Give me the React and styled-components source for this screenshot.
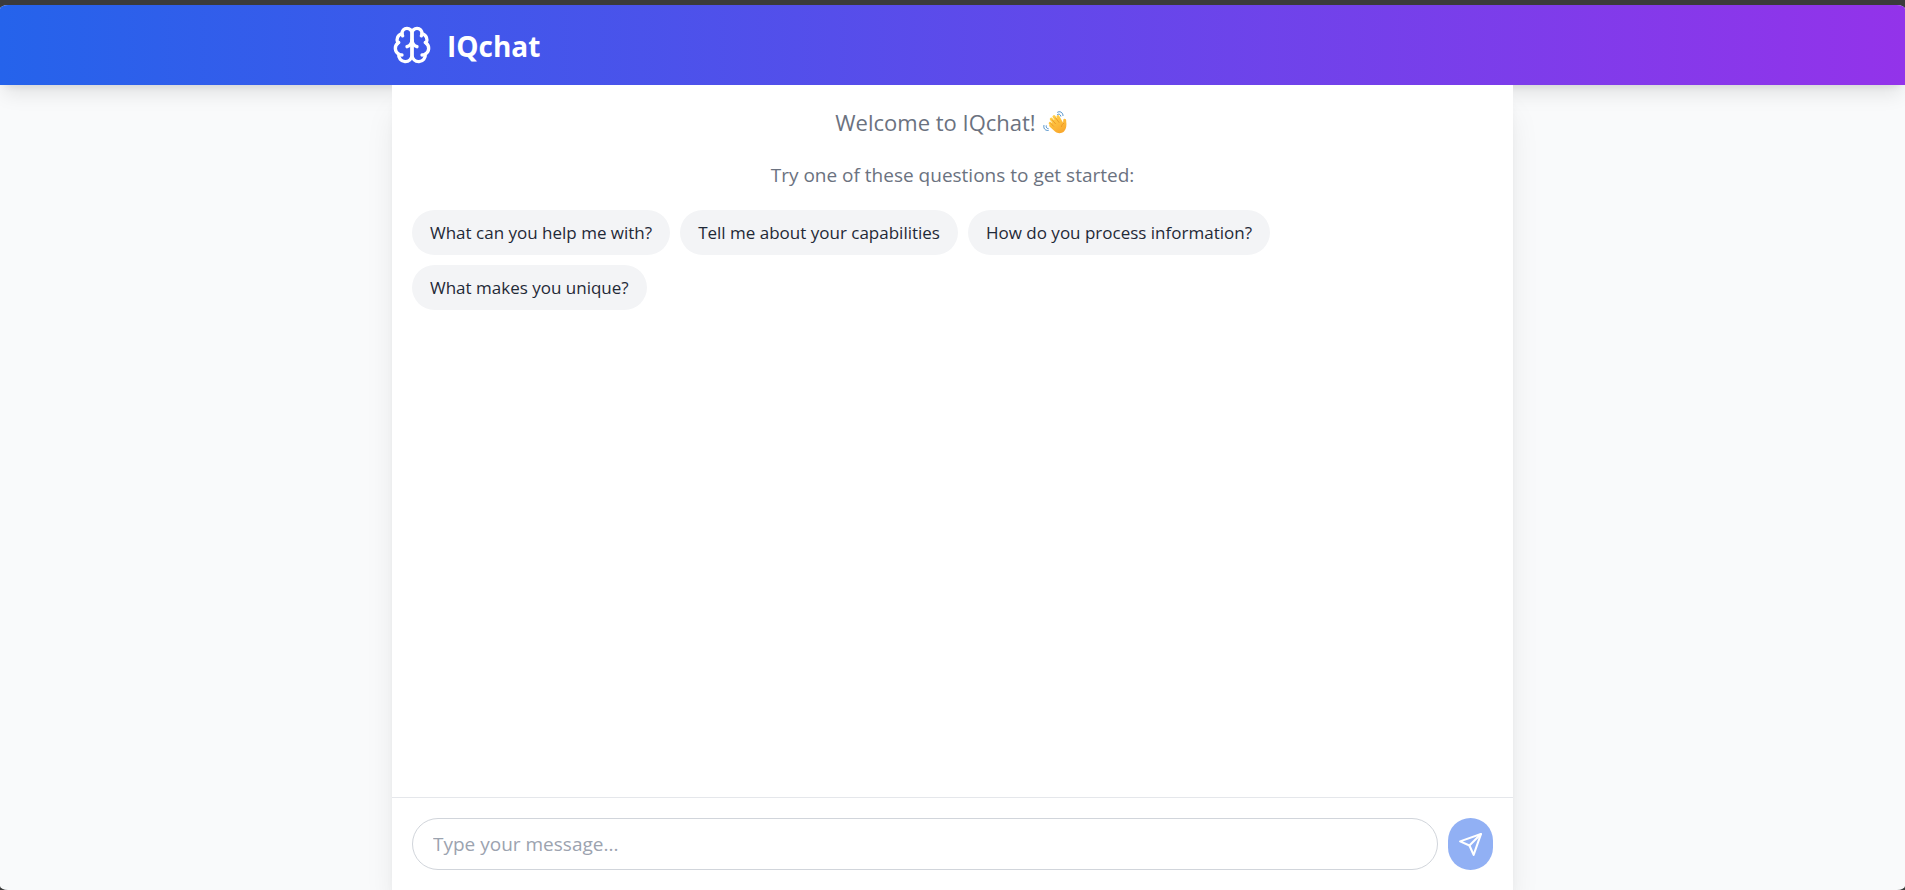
import React, { useState } from "react";
import styled, { createGlobalStyle } from "styled-components";

const GlobalStyle = createGlobalStyle`
  *, *::before, *::after { box-sizing: border-box; }
  body {
    margin: 0;
    background: #3b3b3b;
    font-family: "Segoe UI", "Open Sans", "Noto Sans", sans-serif;
  }
  button, input { font-family: inherit; }
`;

const Frame = styled.div`
  display: flex;
  flex-direction: column;
  height: 100vh;
  padding-top: 5px;
`;

const Window = styled.div`
  flex: 1;
  min-height: 0;
  display: flex;
  flex-direction: column;
  overflow: hidden;
  border-radius: 8px / 4px;
  background: #f9fafb;
`;

const Header = styled.header`
  flex: none;
  padding: 20px 0;
  color: #fff;
  background: linear-gradient(to right, #2563eb, #9333ea);
  box-shadow: 0 12px 19px -4px rgba(0, 0, 0, 0.1), 0 5px 8px -5px rgba(0, 0, 0, 0.1);
`;

const Brand = styled.div`
  display: flex;
  align-items: center;
  gap: 15px;
  max-width: 1121px;
  margin: 0 auto;
`;

const Title = styled.h1`
  margin: 0;
  font-size: 28px;
  line-height: 42px;
  height: 40px;
  font-weight: 700;
`;

const Panel = styled.main`
  flex: 1;
  min-height: 0;
  display: flex;
  flex-direction: column;
  width: 100%;
  max-width: 1121px;
  margin: 0 auto;
  background: #fff;
  position: relative;
  box-shadow: 0 25px 31px -6px rgba(0, 0, 0, 0.1), 0 10px 12px -7px rgba(0, 0, 0, 0.1);
`;

const Messages = styled.section`
  flex: 1;
  min-height: 0;
  overflow-y: auto;
  display: flex;
  flex-direction: column;
  gap: 20px;
  padding: 20px;
`;

const Welcome = styled.p`
  display: flex;
  align-items: center;
  justify-content: center;
  gap: 6px;
  margin: 0;
  color: #6b7280;
  font-size: 22px;
  line-height: 35px;
`;

const Hint = styled.p`
  margin: 0;
  color: #6b7280;
  font-size: 19px;
  line-height: 30px;
  text-align: center;
`;

const Suggestions = styled.div`
  display: flex;
  flex-wrap: wrap;
  gap: 10px;
`;

const Suggestion = styled.button`
  padding: 10px 18px;
  border: 0;
  border-radius: 24px;
  background: #f3f4f6;
  color: #1f2937;
  font-size: 17px;
  line-height: 25px;
  cursor: pointer;
`;

const Composer = styled.form`
  flex: none;
  display: flex;
  gap: 10px;
  padding: 20px;
  border-top: 1px solid #e5e7eb;
`;

const MessageInput = styled.input`
  flex: 1;
  min-width: 0;
  height: 52px;
  padding: 10px 20px;
  border: 1px solid #d1d5db;
  border-radius: 26px;
  background: #fff;
  color: #1f2937;
  font-size: 19px;
  outline: none;
  &::placeholder { color: #9ca3af; opacity: 1; }
`;

const SendButton = styled.button`
  display: flex;
  align-items: center;
  justify-content: center;
  width: 45px;
  padding: 0;
  border: 0;
  border-radius: 24px;
  background: #2563eb;
  color: #fff;
  cursor: pointer;
  &:disabled { opacity: 0.5; cursor: default; }
`;

const BrainIcon = () => (
  <svg width="40" height="40" viewBox="0 0 24 24" fill="none" stroke="currentColor" strokeWidth="2" strokeLinecap="round" strokeLinejoin="round" aria-hidden="true">
    <path d="M12 5a3 3 0 1 0-5.997.125 4 4 0 0 0-2.526 5.77 4 4 0 0 0 .556 6.588A4 4 0 1 0 12 18Z" />
    <path d="M12 5a3 3 0 1 1 5.997.125 4 4 0 0 1 2.526 5.77 4 4 0 0 1-.556 6.588A4 4 0 1 1 12 18Z" />
    <path d="M15 13a4.5 4.5 0 0 1-3-4 4.5 4.5 0 0 1-3 4" />
    <path d="M17.599 6.5a3 3 0 0 0 .399-1.375" />
    <path d="M6.003 5.125A3 3 0 0 0 6.401 6.5" />
    <path d="M3.477 10.896a4 4 0 0 1 .585-.396" />
    <path d="M19.938 10.5a4 4 0 0 1 .585.396" />
    <path d="M6 18a4 4 0 0 1-1.967-.516" />
    <path d="M19.967 17.484A4 4 0 0 1 18 18" />
  </svg>
);

const SendIcon = () => (
  <svg width="25" height="25" viewBox="0 0 24 24" fill="none" stroke="currentColor" strokeWidth="2" strokeLinecap="round" strokeLinejoin="round" aria-hidden="true">
    <path d="m22 2-7 20-4-9-9-4Z" />
    <path d="M22 2 11 13" />
  </svg>
);

const WaveIcon = () => (
  <svg width="28" height="28" viewBox="0 0 28 28" fill="none" role="img" aria-label="Waving hand">
    <defs>
      <linearGradient id="skin" x1="9" y1="6" x2="20" y2="25" gradientUnits="userSpaceOnUse">
        <stop stopColor="#ffd24a" />
        <stop offset="1" stopColor="#f9a52b" />
      </linearGradient>
    </defs>
    <g stroke="url(#skin)" strokeLinecap="round" strokeWidth="3">
      <path d="M8.2 14.2 13 19" />
      <path d="M9.3 10.2 15 16.5" />
      <path d="M12 7.6 17.5 15" />
      <path d="M16 7.6 20 15" />
      <path d="M22.7 11.2 22.5 18" />
    </g>
    <path d="M9 15 12 11l4-2 4.500 5.500 3.500-2.500c.8 4 .5 8-2 10.500-2.500 2.300-6.500 2.200-9 0L7.500 17.500c-.9-1 .1-2.500 1.500-2.500Z" fill="url(#skin)" />
    <path d="m10.300 11 3.200 3.700M13.700 9 17 13.400M9 14.600l2.500 2.600M19.500 17.500c.3-1.600 1-2.600 2.200-3.200" stroke="#e58a1f" strokeWidth=".7" strokeLinecap="round" />
    <path d="M15.600 3.200c2.300-1.500 5.300.2 5.400 3.300M15.600 5.400c1.400-.8 2.700-.1 3.200 1.700M1.900 16.500c-.7 2.900 1.300 5.300 4.300 5M4.200 16.800c-.3 1.500.6 2.700 2 2.900" stroke="#3580c2" strokeWidth=".9" strokeLinecap="round" />
  </svg>
);

const QUESTIONS = [
  "What can you help me with?",
  "Tell me about your capabilities",
  "How do you process information?",
  "What makes you unique?",
];

export default function App() {
  const [message, setMessage] = useState("");

  return (
    <Frame>
      <GlobalStyle />
      <Window>
        <Header>
          <Brand>
            <BrainIcon />
            <Title>IQchat</Title>
          </Brand>
        </Header>
        <Panel>
          <Messages>
            <Welcome>
              Welcome to IQchat!
              <WaveIcon />
            </Welcome>
            <Hint>Try one of these questions to get started:</Hint>
            <Suggestions>
              {QUESTIONS.map((question) => (
                <Suggestion key={question} type="button" onClick={() => setMessage(question)}>
                  {question}
                </Suggestion>
              ))}
            </Suggestions>
          </Messages>
          <Composer onSubmit={(event) => event.preventDefault()}>
            <MessageInput
              type="text"
              aria-label="Message"
              placeholder="Type your message..."
              value={message}
              onChange={(event) => setMessage(event.target.value)}
            />
            <SendButton type="submit" aria-label="Send message" disabled={!message.trim()}>
              <SendIcon />
            </SendButton>
          </Composer>
        </Panel>
      </Window>
    </Frame>
  );
}
